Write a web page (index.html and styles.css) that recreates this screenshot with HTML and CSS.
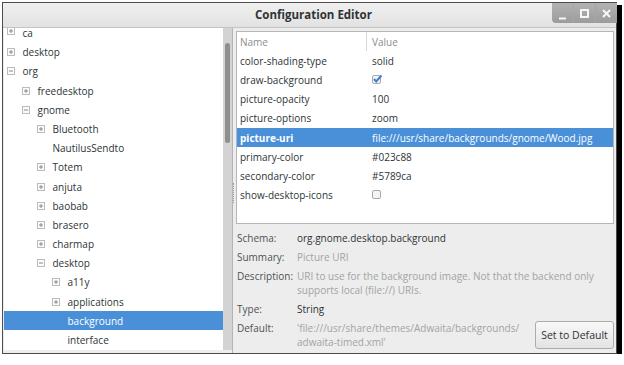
FILE: index.html
```html
<!DOCTYPE html>
<html lang="en">
<head>
    <meta charset="UTF-8">
    <title>Configuration Editor</title>
    <link rel="stylesheet" href="styles.css">
</head>
<body>
    <svg class="defs" width="0" height="0">
        <symbol id="exp-plus" viewBox="0 0 8 8">
            <rect x="0.5" y="0.5" width="7" height="7" fill="#fbfbfb" stroke="#bcbcbc"/>
            <path d="M2 4h4M4 2v4" stroke="#8a8a8a" stroke-width="1"/>
        </symbol>
        <symbol id="exp-minus" viewBox="0 0 8 8">
            <rect x="0.5" y="0.5" width="7" height="7" fill="#fbfbfb" stroke="#bcbcbc"/>
            <path d="M2 4h4" stroke="#8a8a8a" stroke-width="1"/>
        </symbol>
    </svg>

    <div class="window">
        <header class="titlebar">
            <span></span>
            <h1 class="title">Configuration Editor</h1>
            <div class="controls">
                <span class="ctl">
                    <svg width="21" height="20" viewBox="0 0 21 20"><path d="M7 15.5h7" stroke="#f6f6f6" stroke-width="2"/></svg>
                </span>
                <span class="ctl">
                    <svg width="21" height="20" viewBox="0 0 21 20"><rect x="7" y="7" width="7" height="7" fill="none" stroke="#f6f6f6" stroke-width="2"/></svg>
                </span>
                <span class="ctl">
                    <svg width="21" height="20" viewBox="0 0 21 20"><path d="M7 7l7 7M14 7l-7 7" stroke="#f6f6f6" stroke-width="2"/></svg>
                </span>
            </div>
        </header>

        <div class="content">
            <aside class="sidebar">
                <div class="tree-view">
                    <ul class="tree">
                        <li class="node lvl-0 first"><svg class="exp"><use href="#exp-plus"/></svg>ca</li>
                        <li class="node lvl-0"><svg class="exp"><use href="#exp-plus"/></svg>desktop</li>
                        <li class="node lvl-0"><svg class="exp"><use href="#exp-minus"/></svg>org</li>
                        <li class="node lvl-1"><svg class="exp"><use href="#exp-plus"/></svg>freedesktop</li>
                        <li class="node lvl-1"><svg class="exp"><use href="#exp-minus"/></svg>gnome</li>
                        <li class="node lvl-2"><svg class="exp"><use href="#exp-plus"/></svg>Bluetooth</li>
                        <li class="node lvl-2"><span class="exp"></span>NautilusSendto</li>
                        <li class="node lvl-2"><svg class="exp"><use href="#exp-plus"/></svg>Totem</li>
                        <li class="node lvl-2"><svg class="exp"><use href="#exp-plus"/></svg>anjuta</li>
                        <li class="node lvl-2"><svg class="exp"><use href="#exp-plus"/></svg>baobab</li>
                        <li class="node lvl-2"><svg class="exp"><use href="#exp-plus"/></svg>brasero</li>
                        <li class="node lvl-2"><svg class="exp"><use href="#exp-plus"/></svg>charmap</li>
                        <li class="node lvl-2"><svg class="exp"><use href="#exp-minus"/></svg>desktop</li>
                        <li class="node lvl-3"><svg class="exp"><use href="#exp-plus"/></svg>a11y</li>
                        <li class="node lvl-3"><svg class="exp"><use href="#exp-plus"/></svg>applications</li>
                        <li class="node lvl-3 selected"><span class="exp"></span>background</li>
                        <li class="node lvl-3"><span class="exp"></span>interface</li>
                    </ul>
                </div>
                <div class="scrollbar"><div class="thumb"></div></div>
            </aside>

            <div class="handle"><span class="grip"></span></div>

            <main class="pane">
                <div class="keys">
                    <div class="key-row key-head">
                        <span class="key-name">Name</span>
                        <span class="key-value">Value</span>
                    </div>
                    <div class="key-row">
                        <span class="key-name">color-shading-type</span>
                        <span class="key-value">solid</span>
                    </div>
                    <div class="key-row">
                        <span class="key-name">draw-background</span>
                        <span class="key-value">
                            <svg class="check" width="11" height="10" viewBox="0 0 11 10">
                                <rect x="0.5" y="1.5" width="8" height="8" rx="1.5" fill="#f4f4f4" stroke="#a9a9a9"/>
                                <path d="M2 5l2.2 2.4L9.5 1.5" fill="none" stroke="#3d7fcf" stroke-width="2"/>
                            </svg>
                        </span>
                    </div>
                    <div class="key-row">
                        <span class="key-name">picture-opacity</span>
                        <span class="key-value">100</span>
                    </div>
                    <div class="key-row">
                        <span class="key-name">picture-options</span>
                        <span class="key-value">zoom</span>
                    </div>
                    <div class="key-row selected">
                        <span class="key-name changed">picture-uri</span>
                        <span class="key-value">file:///usr/share/backgrounds/gnome/Wood.jpg</span>
                    </div>
                    <div class="key-row">
                        <span class="key-name">primary-color</span>
                        <span class="key-value">#023c88</span>
                    </div>
                    <div class="key-row">
                        <span class="key-name">secondary-color</span>
                        <span class="key-value">#5789ca</span>
                    </div>
                    <div class="key-row">
                        <span class="key-name">show-desktop-icons</span>
                        <span class="key-value">
                            <svg class="check" width="11" height="10" viewBox="0 0 11 10">
                                <rect x="0.5" y="1.5" width="8" height="8" rx="1.5" fill="#f4f4f4" stroke="#a9a9a9"/>
                            </svg>
                        </span>
                    </div>
                </div>

                <dl class="info">
                    <dt>Schema:</dt>
                    <dd>org.gnome.desktop.background</dd>
                    <dt>Summary:</dt>
                    <dd class="muted">Picture URI</dd>
                    <dt>Description:</dt>
                    <dd class="muted">URI to use for the background image. Not that the backend only<br>supports local (file://) URIs.</dd>
                    <dt>Type:</dt>
                    <dd>String</dd>
                    <dt>Default:</dt>
                    <dd class="default-row">
                        <span class="muted">'file:///usr/share/themes/Adwaita/backgrounds/<br>adwaita-timed.xml'</span>
                        <button class="button">Set to Default</button>
                    </dd>
                </dl>
            </main>
        </div>
    </div>
</body>
</html>
```

FILE: styles.css
```css
body {
    margin: 0;
    background-color: #ffffff;
    font-family: 'Open Sans', 'DejaVu Sans', sans-serif;
    font-size: 10px;
    color: #2e3436;
}
.defs {
    position: absolute;
}
.window {
    width: 615px;
    height: 352px;
    margin: 2px 0 0 2px;
    box-sizing: border-box;
    border: 1px solid #4c4c4c;
    box-shadow: 4px 4px 0 1px #000000;
    background-color: #ededed;
    display: flex;
    flex-direction: column;
}
.titlebar {
    height: 25px;
    box-sizing: border-box;
    display: grid;
    grid-template-columns: 1fr auto 1fr;
    align-items: start;
    background: linear-gradient(#f0f0f0, #e2e2e2);
    border-bottom: 1px solid #c4c4c4;
}
.title {
    margin: 0;
    padding-top: 4px;
    padding-left: 8px;
    font-size: 11.5px;
    font-weight: bold;
    color: #2e3436;
}
.controls {
    justify-self: end;
    display: flex;
    height: 20px;
    margin-right: -1px;
    background: linear-gradient(#b2b2b2, #9c9c9c);
    border-bottom-left-radius: 4px;
}
.ctl {
    width: 21px;
    height: 20px;
    border-left: 1px solid #a6a6a6;
}
.ctl:first-child {
    border-left: none;
}
.ctl svg {
    display: block;
}
.content {
    flex: 1;
    display: flex;
    min-height: 0;
}
.sidebar {
    display: flex;
    padding: 0 0 3px 1px;
}
.tree-view {
    width: 219px;
    background-color: #ffffff;
    overflow: hidden;
}
.tree {
    list-style: none;
    margin: 0;
    padding: 0;
}
.node {
    height: 19.2px;
    display: flex;
    align-items: center;
    white-space: nowrap;
}
.node.first {
    height: 14.6px;
    line-height: 10px;
    align-items: flex-start;
}
.node.first .exp {
    margin-top: -1px;
}
.node.selected {
    background-color: #4a90d9;
    color: #ffffff;
}
.exp {
    width: 8px;
    height: 8px;
    margin-right: 7.5px;
    flex: none;
}
.lvl-0 { padding-left: 3px; }
.lvl-1 { padding-left: 18px; }
.lvl-2 { padding-left: 33px; }
.lvl-3 { padding-left: 48px; }
.scrollbar {
    width: 9px;
    background-color: #d3d3d3;
    padding-top: 15px;
}
.thumb {
    width: 5px;
    height: 100px;
    margin-left: 2px;
    border-radius: 3px;
    background-color: #8f8f8f;
}
.handle {
    width: 2px;
    border-left: 1px solid #b4b4b4;
    display: flex;
    align-items: center;
}
.grip {
    width: 1px;
    height: 20px;
    margin-top: 4px;
    border-left: 1px dotted #9a9a9a;
}
.pane {
    flex: 1;
    padding: 3px 2px 0 1px;
}
.keys {
    height: 193px;
    box-sizing: border-box;
    background-color: #ffffff;
    border: 1px solid #b6b6b6;
}
.key-row {
    height: 19.2px;
    display: flex;
    align-items: center;
    white-space: nowrap;
}
.key-name {
    width: 126px;
    padding-left: 3px;
}
.key-value {
    flex: 1;
    padding-left: 6px;
    display: flex;
    align-items: center;
}
.key-head {
    color: #8b8e8f;
}
.key-head .key-value {
    align-self: stretch;
    border-left: 1px solid #d6d6d6;
    padding-left: 5px;
}
.key-row.selected {
    background-color: #4a90d9;
    color: #ffffff;
}
.changed {
    font-weight: bold;
}
.check {
    display: block;
    margin-top: -2px;
}
.info {
    margin: 0;
    padding: 7px 0 0 1px;
    display: grid;
    grid-template-columns: 60px 1fr;
    row-gap: 5px;
    line-height: 14px;
}
.info dt {
    color: #4d5254;
}
.info dd {
    margin: 0;
}
.muted {
    color: #a2a4a4;
}
.default-row {
    display: flex;
    justify-content: space-between;
    align-items: flex-start;
}
.button {
    width: 79px;
    height: 28px;
    font-family: inherit;
    font-size: 10.5px;
    color: #2e3436;
    background: linear-gradient(#f8f8f8, #e3e3e3);
    border: 1px solid #ababab;
    border-radius: 3px;
    padding: 0;
}
```
